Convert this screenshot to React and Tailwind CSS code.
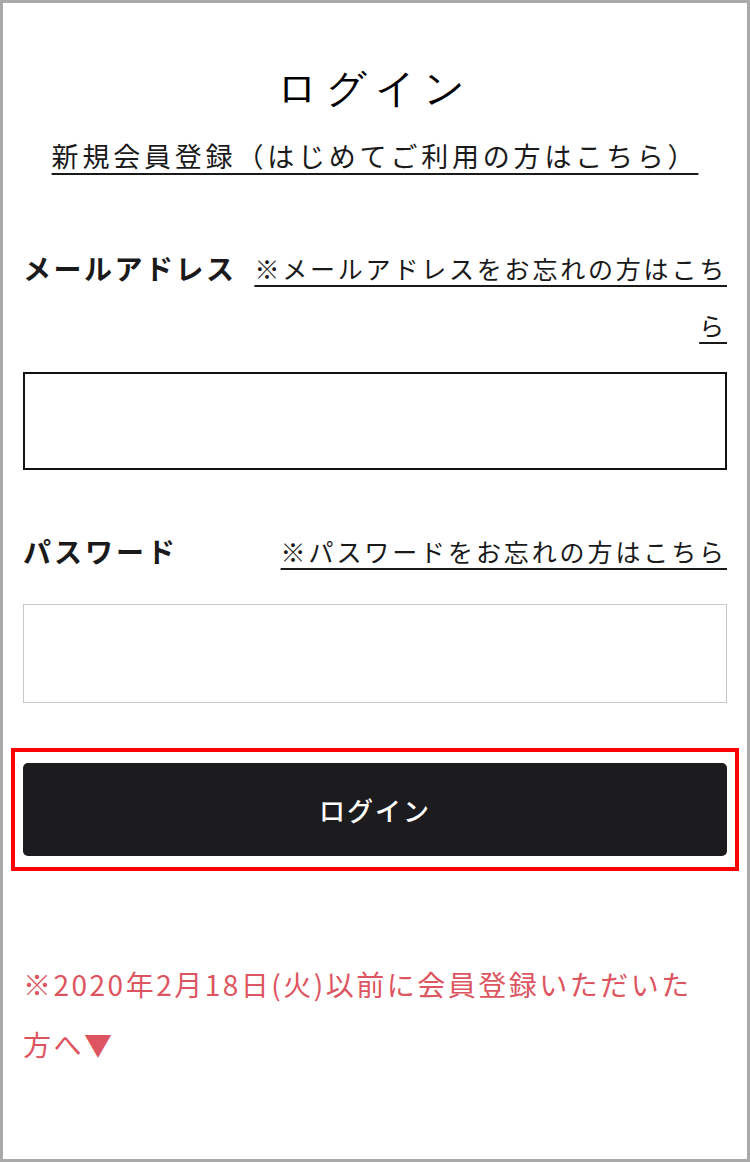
export default function App() {
  return (
    <div
      className="h-[1162px] w-[750px] border-[3px] border-[#a9a9a9] bg-white px-[20px] text-[#1a1a1a]"
      style={{ fontFamily: '"Noto Sans CJK JP", "Noto Sans", sans-serif' }}
    >
      {/* title */}
      <h1
        className="mt-[58px] text-center text-[40px] font-light leading-[56px] tracking-[8px] text-black"
        style={{ fontFamily: 'serif' }}
      >
        ログイン
      </h1>
      <div className="mt-[19px] text-center">
        <a className="text-[27px] leading-[40px] tracking-[3.8px] underline underline-offset-[6px] decoration-[2px]">
          新規会員登録（はじめてご利用の方はこちら）
        </a>
      </div>

      {/* email */}
      <div className="mt-[64px] flex items-start justify-between gap-[10px]">
        <label className="shrink-0 text-[28px] font-bold leading-[57px] tracking-[2.5px]">
          メールアドレス
        </label>
        <a className="min-w-0 flex-1 text-right text-[25px] leading-[57px] tracking-[2.8px] underline underline-offset-[6px] decoration-[2px]">
          ※メールアドレスをお忘れの方はこちら
        </a>
      </div>
      <input
        type="text"
        className="mt-[18px] block h-[98px] w-full border-2 border-[#111] bg-white outline-none"
      />

      {/* password */}
      <div className="mt-[53px] flex items-start justify-between gap-[10px]">
        <label className="shrink-0 text-[28px] font-bold leading-[57px] tracking-[3px]">
          パスワード
        </label>
        <a className="text-right text-[25px] leading-[57px] tracking-[2.9px] underline underline-offset-[6px] decoration-[2px]">
          ※パスワードをお忘れの方はこちら
        </a>
      </div>
      <input
        type="password"
        className="mt-[24px] block h-[99px] w-full border border-[#c8c8c8] bg-white outline-none"
      />

      {/* login button with highlight */}
      <div className="-mx-[12px] mt-[45px] border-4 border-[#ff0000] px-[8px] py-[11px]">
        <button className="flex h-[93px] w-full items-center justify-center rounded-[5px] bg-[#1c1b1d] text-[26px] font-medium tracking-[2px] text-white">
          ログイン
        </button>
      </div>

      {/* notice */}
      <p className="mt-[83px] pr-[20px] text-[28px] leading-[60px] tracking-[2.5px] text-[#dd5560]">
        ※2020年2月18日(火)以前に会員登録いただいた方へ▼
      </p>
    </div>
  );
}
